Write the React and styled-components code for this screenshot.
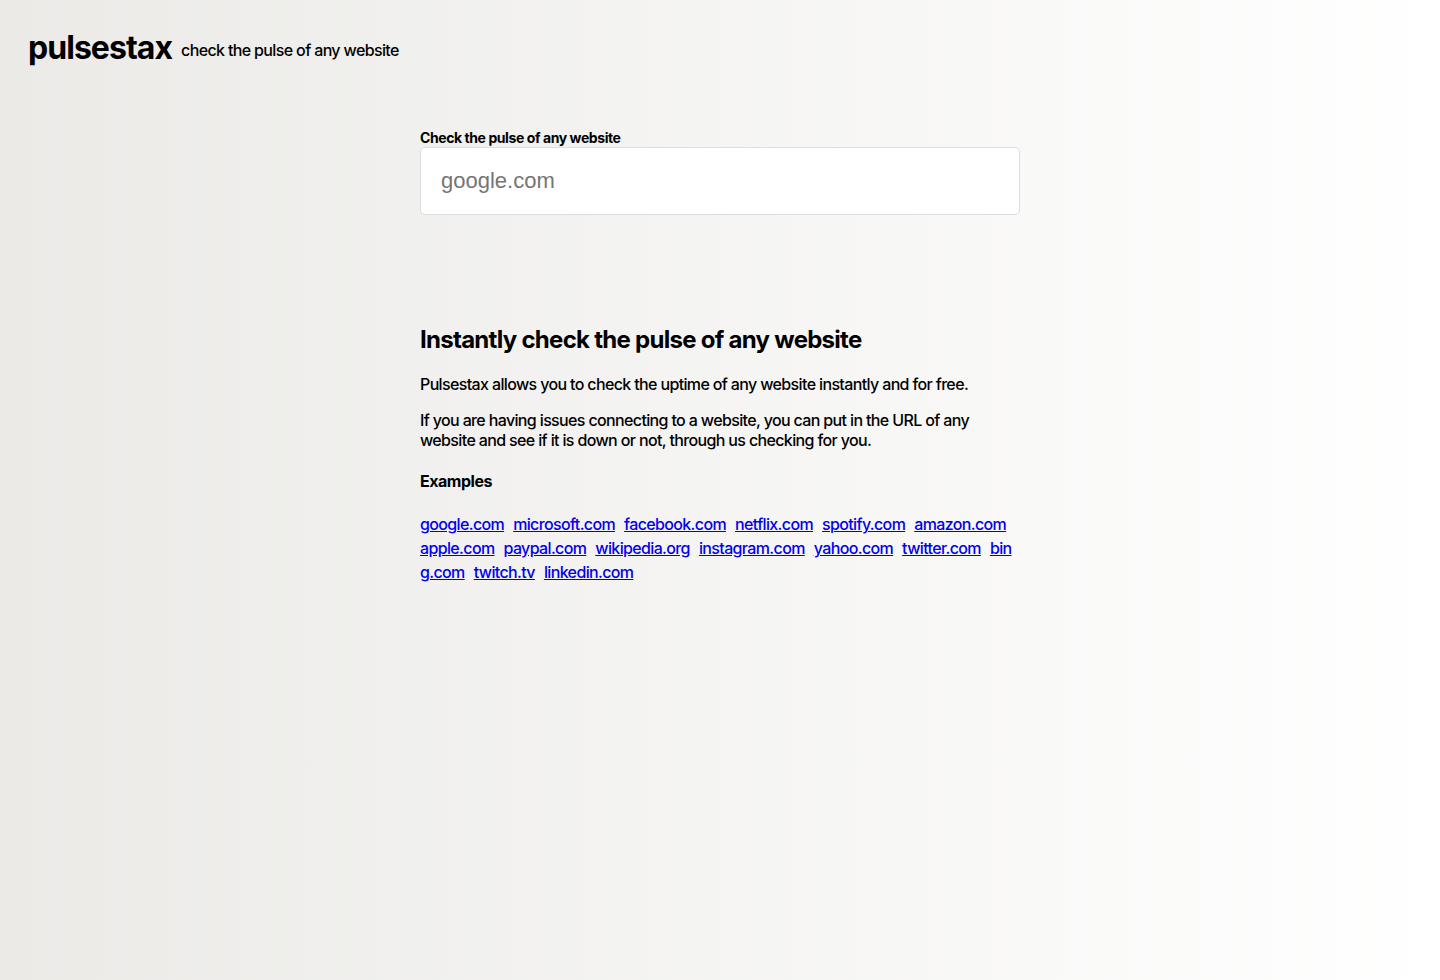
import React, { useState } from "react";
import styled, { createGlobalStyle } from "styled-components";

const GlobalStyle = createGlobalStyle`
  body {
    margin: 0;
    min-height: 100vh;
    background: linear-gradient(to right, #ebeae7, #ffffff);
    color: #000;
    font: 500 16px/20px Inter, "Liberation Sans", sans-serif;
    letter-spacing: -0.04em;
  }

  h1, h2, h4, label {
    font-weight: 700;
    letter-spacing: -0.03em;
  }
`;

const Header = styled.header`
  display: flex;
  align-items: center;
  gap: 9px;
  padding: 28px;
`;

const Logo = styled.h1`
  margin: 0;
  font-size: 32px;
  line-height: 40px;
`;

const Tagline = styled.span`
  padding-top: 4px;
`;

const Main = styled.main`
  box-sizing: border-box;
  width: 100%;
  max-width: 600px;
  margin: 0 auto;
  padding-top: 32px;
`;

const Form = styled.form`
  display: flex;
  flex-direction: column;
`;

const Label = styled.label`
  font-size: 14px;
  line-height: 19px;
`;

const UrlInput = styled.input`
  box-sizing: border-box;
  width: 100%;
  height: 68px;
  padding: 20px;
  border: 1px solid #ddd;
  border-radius: 5px;
  background: #fff;
  font: 400 22px "Liberation Sans", Arial, sans-serif;

  &::placeholder {
    color: #757575;
  }
`;

const About = styled.section`
  padding-top: 110px;
`;

const Title = styled.h2`
  margin: 0 0 19px;
  font-size: 24px;
  line-height: 30px;
`;

const Paragraph = styled.p`
  margin: 0 0 16px;
`;

const Subtitle = styled.h4`
  margin: 21px 0;
  font-size: 16px;
`;

const Examples = styled.div`
  line-height: 24px;
  word-break: break-all;
`;

const ExampleLink = styled.a`
  margin-right: 9px;
  color: #0000ee;
  text-decoration: underline;
`;

const sites = [
  "google.com", "microsoft.com", "facebook.com", "netflix.com", "spotify.com",
  "amazon.com", "apple.com", "paypal.com", "wikipedia.org", "instagram.com",
  "yahoo.com", "twitter.com", "bing.com", "twitch.tv", "linkedin.com",
];

export default function App() {
  const [url, setUrl] = useState("");

  return (
    <>
      <GlobalStyle />
      <Header>
        <Logo>pulsestax</Logo>
        <Tagline>check the pulse of any website</Tagline>
      </Header>
      <Main>
        <Form onSubmit={(event) => event.preventDefault()}>
          <Label htmlFor="url">Check the pulse of any website</Label>
          <UrlInput
            id="url"
            type="text"
            placeholder="google.com"
            value={url}
            onChange={(event) => setUrl(event.target.value)}
          />
        </Form>
        <About>
          <Title>Instantly check the pulse of any website</Title>
          <Paragraph>
            Pulsestax allows you to check the uptime of any website instantly and for free.
          </Paragraph>
          <Paragraph>
            If you are having issues connecting to a website, you can put in the URL of any
            website and see if it is down or not, through us checking for you.
          </Paragraph>
          <Subtitle>Examples</Subtitle>
          <Examples>
            {sites.map((site) => (
              <ExampleLink key={site} href={`https://${site}`}>{site}</ExampleLink>
            ))}
          </Examples>
        </About>
      </Main>
    </>
  );
}
